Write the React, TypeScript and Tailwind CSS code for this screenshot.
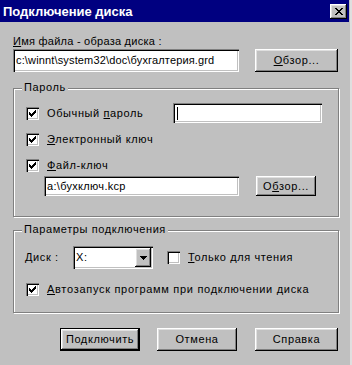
import type { ReactNode } from 'react';

// classic 3D bevels
const sunken = 'bg-white shadow-[inset_1px_1px_0_#808080,inset_2px_2px_0_#000,inset_-1px_-1px_0_#fff,inset_-2px_-2px_0_#c0c0c0]';
const raised = 'bg-[#c0c0c0] shadow-[inset_-1px_-1px_0_#000,inset_1px_1px_0_#fff,inset_-2px_-2px_0_#808080,inset_2px_2px_0_#dfdfdf]';

function Pixels({ rows, w, h }: { rows: number[][][]; w: number; h: number }) {
  return (
    <svg width={w} height={h} viewBox={`0 0 ${w} ${h}`} shapeRendering="crispEdges">
      {rows.map((spans, y) =>
        spans.map(([a, b], i) => <rect key={`${y}-${i}`} x={a} y={y} width={b - a + 1} height={1} fill="#000" />)
      )}
    </svg>
  );
}

const CHECK = [[[6, 6]], [[5, 6]], [[0, 0], [4, 6]], [[0, 1], [3, 5]], [[0, 4]], [[1, 3]], [[2, 2]]];
const CROSS = [[[0, 1], [6, 7]], [[1, 2], [5, 6]], [[2, 5]], [[3, 4]], [[2, 5]], [[1, 2], [5, 6]], [[0, 1], [6, 7]]];
const ARROW = [[[0, 6]], [[1, 5]], [[2, 4]], [[3, 3]]];

function CheckBox({ checked }: { checked: boolean }) {
  return (
    <div className={`w-[13px] h-[13px] shrink-0 flex items-center justify-center ${sunken}`}>
      {checked && <Pixels rows={CHECK} w={7} h={7} />}
    </div>
  );
}

function Btn({ children, className = '', isDefault = false }: { children: ReactNode; className?: string; isDefault?: boolean }) {
  if (isDefault) {
    return (
      <div className={`border border-black flex ${className}`}>
        <div className={`flex-1 flex items-center justify-center ${raised}`}>{children}</div>
      </div>
    );
  }
  return <div className={`flex items-center justify-center ${raised} ${className}`}>{children}</div>;
}

function Group({ label, className = '', children }: { label: string; className?: string; children: ReactNode }) {
  return (
    <div className={`relative w-[326px] border border-[#808080] shadow-[1px_1px_0_#fff,inset_1px_1px_0_#fff] ${className}`}>
      <span className="absolute left-[8px] top-[-8px] px-[2px] bg-[#c0c0c0] leading-[13px]">{label}</span>
      {children}
    </div>
  );
}

const U = ({ children }: { children: ReactNode }) => <span className="underline underline-offset-[1px]">{children}</span>;

export default function App() {
  return (
    <div className="w-[352px] h-[365px] bg-[#c0c0c0] flex overflow-hidden text-black text-[11px] leading-[13px] tracking-[0.6px] font-['Liberation_Sans',Arial,sans-serif]">
      <div className="w-[349px] flex flex-col">
        {/* title bar */}
        <div className="h-[22px] bg-[#000080] flex items-center justify-between pl-[3px] pr-[2px]">
          <span className="text-white font-bold text-[13px] tracking-[0px]">Подключение диска</span>
          <Btn className="w-[17px] h-[15px]">
            <Pixels rows={CROSS} w={8} h={7} />
          </Btn>
        </div>

        <div className="pl-[13px] pt-[13px] flex flex-col">
          <div className="h-[13px] tracking-[0.25px]">
            <U>И</U>мя файла - образа диска :
          </div>
          <div className="flex mt-[1px] gap-[16px]">
            <div className={`w-[226px] h-[23px] flex items-center pl-[3px] tracking-[0.15px] ${sunken}`}>c:\winnt\system32\doc\бухгалтерия.grd</div>
            <Btn className="w-[83px] h-[23px]">
              <U>О</U>бзор...
            </Btn>
          </div>

          <Group label="Пароль" className="mt-[16px] h-[129px] pt-[14px] pl-[12px]">
            <div className="flex items-center h-[20px]">
              <CheckBox checked />
              <span className="ml-[8px] w-[126px]">
                Обычный <U>п</U>ароль
              </span>
              <div className={`w-[149px] h-[20px] flex items-center pl-[4px] ${sunken}`}>
                <div className="w-[1px] h-[13px] bg-black" />
              </div>
            </div>
            <div className="flex items-center h-[20px] mt-[6px]">
              <CheckBox checked />
              <span className="ml-[8px]">
                <U>Э</U>лектронный ключ
              </span>
            </div>
            <div className="flex items-center h-[20px] mt-[6px]">
              <CheckBox checked />
              <span className="ml-[8px]">
                <U>Ф</U>айл-ключ
              </span>
            </div>
            <div className="flex mt-[1px] ml-[18px] gap-[17px]">
              <div className={`w-[195px] h-[20px] flex items-center pl-[3px] tracking-[0.3px] ${sunken}`}>a:\бухключ.kcp</div>
              <Btn className="w-[60px] h-[20px]">
                О<U>б</U>зор...
              </Btn>
            </div>
          </Group>

          <Group label="Параметры подключения" className="mt-[13px] h-[83px] pt-[15px] pl-[11px]">
            <div className="flex items-center h-[23px]">
              <span className="w-[48px]">
                <U>Д</U>иск :
              </span>
              <div className={`w-[80px] h-[23px] flex items-center justify-between pl-[3px] pr-[2px] ${sunken}`}>
                <span>X:</span>
                <Btn className="w-[16px] h-[19px]">
                  <Pixels rows={ARROW} w={7} h={4} />
                </Btn>
              </div>
              <div className="ml-[14px]">
                <CheckBox checked={false} />
              </div>
              <span className="ml-[8px]">
                <U>Т</U>олько для чтения
              </span>
            </div>
            <div className="flex items-center h-[20px] mt-[10px] pl-[1px]">
              <CheckBox checked />
              <span className="ml-[8px] tracking-[0.7px]">
                <U>А</U>втозапуск программ при подключении диска
              </span>
            </div>
          </Group>

          <div className="flex mt-[15px] ml-[47px]">
            <Btn isDefault className="w-[80px] h-[23px]">Подключить</Btn>
            <Btn className="w-[80px] h-[23px] ml-[17px]">Отмена</Btn>
            <Btn className="w-[83px] h-[23px] ml-[18px]">Справка</Btn>
          </div>
        </div>
      </div>
      <div className="w-[1px] bg-[#c0c0c0]" />
      <div className="w-[2px] bg-[#dfdfdf]" />
    </div>
  );
}
